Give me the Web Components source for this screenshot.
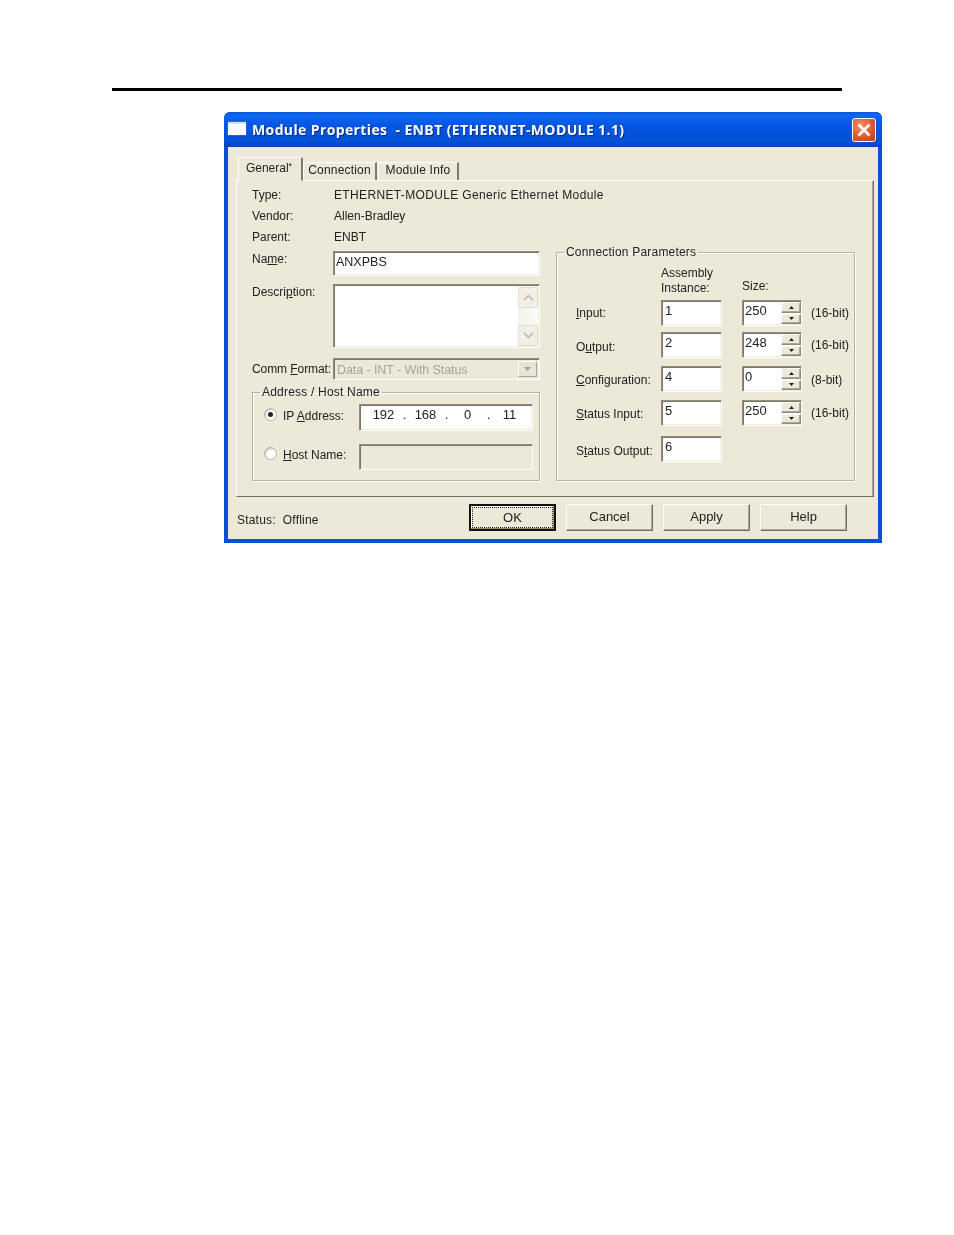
<!DOCTYPE html>
<html>
<head>
<meta charset="utf-8">
<title>Module Properties</title>
<style>
  html, body { margin: 0; background: #fff; }
  body { font: 12px "Liberation Sans", Arial, sans-serif; color: #222; }
</style>
</head>
<body>
<app-page></app-page>
<script>
const sunken = `
  border: 1px solid; border-color: #918f7e #fff #fff #918f7e;
  box-shadow: inset 1px 1px 0 #7a786c, inset -1px -1px 0 #efede0;
  box-sizing: border-box;`;

function define(name, css, html) {
  customElements.define(name, class extends HTMLElement {
    constructor() {
      super();
      this.attachShadow({ mode: "open" });
    }
    connectedCallback() {
      const markup = typeof html === "function" ? html(this) : html;
      this.shadowRoot.innerHTML = `<style>${css}</style>${markup}`;
    }
  });
}

define("xp-input", `
  :host { display: block; height: 26px; background: #fff; padding: 0 0 0 3px; line-height: 20px; font-size: 13px; ${sunken} }
`, `<slot></slot>`);

define("xp-disabled-box", `
  :host { display: block; height: 26px; ${sunken} }
`, `<slot></slot>`);

define("xp-ip-box", `
  :host { display: grid; grid-template-columns: 31px 11px 31px 11px 31px 11px 31px; height: 27px; padding-left: 8px; background: #fff; line-height: 20px; font-size: 13px; text-align: center; ${sunken} }
`, `<span>192</span><span>.</span><span>168</span><span>.</span><span>0</span><span>.</span><span>11</span>`);

define("xp-spinner", `
  :host { display: flex; width: 60px; height: 26px; background: #fff; padding: 1px 0 1px 2px; font-size: 13px; line-height: 18px; ${sunken} }
  .val { flex: 1; }
  .btns { width: 20px; display: grid; grid-template-rows: 1fr 1fr; gap: 1px; }
  .btn { background: #ece9d8; border: 1px solid; border-color: #fff #8e8c7c #8e8c7c #fff; box-shadow: inset -1px -1px 0 #aca899; display: flex; align-items: center; justify-content: center; }
  svg { width: 5px; height: 3px; fill: #222; }
`, `<span class="val"><slot></slot></span>
    <span class="btns">
      <span class="btn"><svg viewBox="0 0 5 3"><path d="M2.5 0 5 3H0z"/></svg></span>
      <span class="btn"><svg viewBox="0 0 5 3"><path d="M0 0h5L2.5 3z"/></svg></span>
    </span>`);

define("xp-description", `
  :host { display: flex; height: 64px; background: #fff; padding: 2px 1px 1px 0; justify-content: flex-end; ${sunken} }
  .bar { width: 20px; display: flex; flex-direction: column; justify-content: space-between; background: linear-gradient(90deg, #f2f1ea, #fbfbf8); }
  .b { height: 19px; background: #f1efe6; border: 1px solid #e2e0d0; border-radius: 2px; display: flex; align-items: center; justify-content: center; }
  svg { width: 11px; height: 7px; fill: none; stroke: #c3c1b4; stroke-width: 1.8; }
`, `<div class="bar">
      <div class="b"><svg viewBox="0 0 11 7"><path d="M1 6 5.500 1.500 10 6"/></svg></div>
      <div class="b"><svg viewBox="0 0 11 7"><path d="M1 1 5.500 5.500 10 1"/></svg></div>
    </div>`);

define("xp-select", `
  :host { display: flex; height: 22px; padding: 2px 2px 2px 3px; color: #a6a493; font-size: 12.5px; line-height: 18px; ${sunken} }
  .val { flex: 1; white-space: nowrap; }
  .btn { width: 17px; background: #e7e4d5; border: 1px solid; border-color: #fff #a8a696 #a8a696 #fff; display: flex; align-items: center; justify-content: center; }
  svg { width: 7px; height: 4px; fill: #a6a493; }
`, `<span class="val"><slot></slot></span>
    <span class="btn"><svg viewBox="0 0 7 4"><path d="M0 0h7L3.500 4z"/></svg></span>`);

define("xp-radio", `
  :host { display: inline-block; width: 13px; height: 13px; border-radius: 50%; background: #fff; border: 1px solid #b5b3a5; box-sizing: border-box; box-shadow: inset 1px 1px 1px #c5c3b5; position: relative; }
  :host([checked])::after { content: ""; position: absolute; left: 3px; top: 3px; width: 5px; height: 5px; border-radius: 50%; background: #222; }
`, ``);

define("xp-group", `
  :host { display: block; box-sizing: border-box; }
  fieldset { margin: 0; height: 100%; box-sizing: border-box; border: 1px solid #b5b3a3; box-shadow: 1px 1px 0 #fff, inset 1px 1px 0 #fff; padding: 0; }
  legend { padding: 0 2px; margin-left: 7px; line-height: 14px; height: 14px; white-space: nowrap; letter-spacing: .2px; }
  .body { padding: var(--group-pad, 0); }
`, (el) => `<fieldset><legend>${el.getAttribute("label")}</legend><div class="body"><slot></slot></div></fieldset>`);

define("xp-button", `
  :host { display: block; width: 87px; height: 27px; box-sizing: border-box; background: #ece9d8; border: 1px solid; border-color: #fff #716f64 #716f64 #fff; box-shadow: inset -1px -1px 0 #aca899; text-align: center; line-height: 24px; font-size: 13px; }
  :host([default]) { border: 2px solid #111; box-shadow: inset -1px -1px 0 #8e8c7c, inset 1px 1px 0 #fff; line-height: 23px; padding: 2px; }
  :host([default]) .in { display: block; height: 19px; line-height: 19px; outline: 1px dotted #222; }
`, `<span class="in"><slot></slot></span>`);

define("xp-tabs", `
  :host { display: flex; align-items: flex-end; height: 24px; padding-left: 2px; position: relative; z-index: 1; margin-bottom: -1px; }
  .tab { box-sizing: border-box; height: 18px; background: #ece9d8; border-right: 2px solid #7d7b6e; border-top: 1px solid #fff; border-left: 1px solid #fff; text-align: center; line-height: 15px; white-space: nowrap; margin-bottom: 1px; letter-spacing: .2px; }
  .on { height: 24px; width: 65px; margin: 0; border-radius: 2px 2px 0 0; line-height: 21px; padding-right: 2px; border-bottom: 1px solid #ece9d8; letter-spacing: 0; }
  sup { font-size: 9px; line-height: 0; vertical-align: 3px; }
`, `<div class="tab on">General<sup>*</sup></div>
    <div class="tab" style="width:74px">Connection</div>
    <div class="tab" style="width:81px;margin-left:1px">Module Info</div>`);

define("xp-window", `
  :host { display: block; width: 658px; height: 431px; box-sizing: border-box; background: #0a4fd8; border-radius: 6px 6px 0 0; overflow: hidden; }
  .title { height: 35px; display: flex; align-items: center; padding: 0 6px 0 4px; gap: 6px; box-sizing: border-box; background: linear-gradient(180deg, #0a57d8 0, #0f67f2 10%, #0455e0 40%, #0451d8 85%, #0a3fb8 100%); color: #fff; font: bold 14px "Open Sans", sans-serif; letter-spacing: .38px; text-shadow: 1px 1px 0 #0a2f80; white-space: pre; }
  .ico { width: 18px; height: 13px; background: #fff; border-top: 2px solid #d6e2f7; box-sizing: border-box; box-shadow: 0 0 1px #9fbcf0; margin-top: -2px; }
  .t { flex: 1; }
  .close { width: 24px; height: 24px; box-sizing: border-box; border: 1px solid #fff; border-radius: 3px; background: radial-gradient(circle at 35% 30%, #ef8d6c, #dc5a32 55%, #c03a18); display: flex; align-items: center; justify-content: center; margin-top: 1px; }
  .close svg { width: 14px; height: 14px; stroke: #fff; stroke-width: 2.6; fill: none; }
  .client { height: 392px; margin: 0 4px; background: #ece9d8; }
`, (el) => `<div class="title"><span class="ico"></span><span class="t">${el.getAttribute("label")}</span>
      <span class="close"><svg viewBox="0 0 14 14"><path d="M1.500 1.500 12.500 12.500M12.500 1.500 1.500 12.500"/></svg></span></div>
    <div class="client"><slot></slot></div>`);

define("module-dialog", `
  :host { display: block; padding: 10px 4px 0 8px; box-sizing: border-box; height: 392px; }
  u { text-underline-offset: 1px; }
  .pane { box-sizing: border-box; height: 317px; border: 1px solid; border-color: #fff #716f64 #716f64 #fff; box-shadow: inset -1px 0 0 #aca899; padding: 3px 0 0 15px; display: flex; gap: 16px; }
  .left { width: 288px; flex: none; }
  .right { width: 299px; flex: none; margin-top: 61px; height: 236px; --group-pad: 0 0 0 19px; }
  .row { display: grid; grid-template-columns: 81px 207px; align-items: center; white-space: nowrap; }
  .row > span:nth-child(2) { padding-left: 1px; }
  .info { height: 21px; }
  .name { height: 25px; margin: 4px 0 8px; }
  .name > span { margin-top: -10px; }
  .name xp-input { height: 25px; line-height: 20px; padding-left: 2px; font-size: 12.500px; }
  .desc { align-items: start; height: 64px; }
  .desc > span { margin-top: 1px; }
  .fmt { margin: 10px 0 5px; height: 22px; letter-spacing: -.08px; }
  .addr { height: 96px; --group-pad: 0 0 0 11px; }
  .ip { display: grid; grid-template-columns: 19px 76px 174px; align-items: center; height: 27px; white-space: nowrap; }
  .ip.first { margin-top: 5px; }
  .ip.second { margin-top: 12px; }
  .ip xp-radio { margin-top: -6px; }
  .ip > span { margin-top: -3px; }
  .conn { display: grid; grid-template-columns: 85px 81px 69px auto; grid-template-rows: 41px 32px 34px 34px 36px 26px; white-space: nowrap; align-items: start; }
  .conn > span.lab { padding-top: 6px; }
  .conn > span.unit { padding-top: 6px; }
  .conn > .p7 { padding-top: 7px !important; }
  .conn > .p8 { padding-top: 8px !important; }
  .conn xp-input { width: 61px; }
  .head { line-height: 15px; margin-top: 7px; }
  .foot { display: flex; align-items: center; height: 47px; padding-right: 27px; }
  .status { flex: 1; white-space: pre; margin-left: 1px; letter-spacing: .2px; transform: translateY(-1px); }
  .btns { display: flex; gap: 10px; margin-top: -6px; }
`, `
  <xp-tabs></xp-tabs>
  <div class="pane">
    <div class="left">
      <div class="row info"><span>Type:</span><span style="letter-spacing:.35px">ETHERNET-MODULE Generic Ethernet Module</span></div>
      <div class="row info"><span>Vendor:</span><span>Allen-Bradley</span></div>
      <div class="row info"><span>Parent:</span><span>ENBT</span></div>
      <div class="row name"><span>Na<u>m</u>e:</span><xp-input>ANXPBS</xp-input></div>
      <div class="row desc"><span>Descri<u>p</u>tion:</span><xp-description></xp-description></div>
      <div class="row fmt"><span>Comm <u>F</u>ormat:</span><xp-select>Data - INT - With Status</xp-select></div>
      <xp-group class="addr" label="Address / Host Name">
        <div class="ip first"><xp-radio checked></xp-radio><span>IP <u>A</u>ddress:</span><xp-ip-box></xp-ip-box></div>
        <div class="ip second"><xp-radio></xp-radio><span><u>H</u>ost Name:</span><xp-disabled-box></xp-disabled-box></div>
      </xp-group>
    </div>
    <xp-group class="right" label="Connection Parameters">
      <div class="conn">
        <span></span><span class="head">Assembly<br>Instance:</span><span class="head" style="padding-top:13px">Size:</span><span></span>
        <span class="lab"><u>I</u>nput:</span><xp-input>1</xp-input><xp-spinner>250</xp-spinner><span class="unit">(16-bit)</span>
        <span class="lab p8">O<u>u</u>tput:</span><xp-input>2</xp-input><xp-spinner>248</xp-spinner><span class="unit">(16-bit)</span>
        <span class="lab p7"><u>C</u>onfiguration:</span><xp-input>4</xp-input><xp-spinner>0</xp-spinner><span class="unit p7">(8-bit)</span>
        <span class="lab p7"><u>S</u>tatus Input:</span><xp-input>5</xp-input><xp-spinner>250</xp-spinner><span class="unit">(16-bit)</span>
        <span class="lab p8">S<u>t</u>atus Output:</span><xp-input>6</xp-input><span></span><span></span>
      </div>
    </xp-group>
  </div>
  <div class="foot">
    <span class="status">Status:  Offline</span>
    <div class="btns">
      <xp-button default>OK</xp-button>
      <xp-button>Cancel</xp-button>
      <xp-button>Apply</xp-button>
      <xp-button>Help</xp-button>
    </div>
  </div>
`);

define("app-page", `
  :host { display: block; height: 1235px; background: #fff; padding-top: 88px; box-sizing: border-box; }
  .rule { height: 3px; width: 730px; margin-left: 112px; background: #000; }
  xp-window { margin: 21px 0 0 224px; filter: blur(.3px); }
`, `
  <div class="rule"></div>
  <xp-window label="Module Properties  - ENBT (ETHERNET-MODULE 1.1)"><module-dialog></module-dialog></xp-window>
`);
</script>
</body>
</html>
